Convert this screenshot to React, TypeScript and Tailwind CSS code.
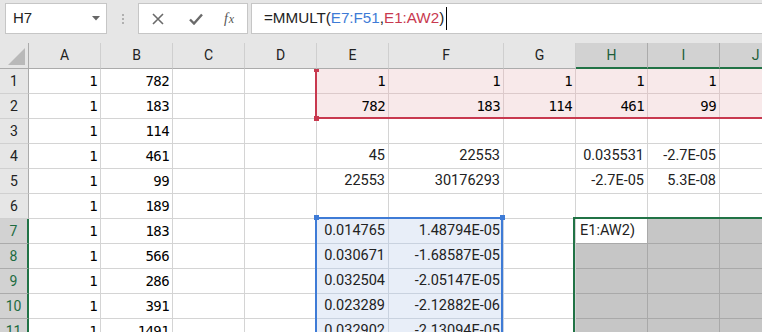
import React from "react";

type Kind = "mono" | "sans";
type Cell = { v: string; k?: Kind };

const W = ["w-[72px]", "w-[72px]", "w-[72px]", "w-[72px]", "w-[72px]", "w-[115px]", "w-[72px]", "w-[72px]", "w-[72px]", "w-[72px]"];
const LETTERS = ["A", "B", "C", "D", "E", "F", "G", "H", "I", "J"];

const m = (v: string): Cell => ({ v, k: "mono" });
const s = (v: string): Cell => ({ v, k: "sans" });
const e: Cell = { v: "" };

const ROWS: Cell[][] = [
  [m("1"), m("782"), e, e, m("1"), m("1"), m("1"), m("1"), m("1"), e],
  [m("1"), m("183"), e, e, m("782"), m("183"), m("114"), m("461"), m("99"), e],
  [m("1"), m("114"), e, e, e, e, e, e, e, e],
  [m("1"), m("461"), e, e, s("45"), s("22553"), e, s("0.035531"), s("-2.7E-05"), e],
  [m("1"), m("99"), e, e, s("22553"), s("30176293"), e, s("-2.7E-05"), s("5.3E-08"), e],
  [m("1"), m("189"), e, e, e, e, e, e, e, e],
  [m("1"), m("183"), e, e, s("0.014765"), s("1.48794E-05"), e, e, e, e],
  [m("1"), m("566"), e, e, s("0.030671"), s("-1.68587E-05"), e, e, e, e],
  [m("1"), m("286"), e, e, s("0.032504"), s("-2.05147E-05"), e, e, e, e],
  [m("1"), m("391"), e, e, s("0.023289"), s("-2.12882E-06"), e, e, e, e],
  [m("1"), m("1491"), e, e, s("0.032902"), s("-2.13094E-05"), e, e, e, e],
];

function region(r: number, c: number): string {
  if (r <= 1 && c >= 4) return "bg-[#f8e9ea] border-[#dccacb]";
  if (r >= 6 && (c === 4 || c === 5)) return "bg-[#e8eef8] border-[#c9d2df]";
  if (r >= 6 && c >= 7 && !(r === 6 && c === 7)) return "bg-[#c6c6c6] border-[#a9a9a9]";
  return "bg-white border-[#d4d4d4]";
}

function GridCell({ cell, r, c }: { cell: Cell; r: number; c: number }) {
  const font =
    cell.k === "mono"
      ? "font-['DejaVu_Sans_Mono',monospace] text-[14px] tracking-[-0.6px] text-black"
      : "font-['Roboto',sans-serif] text-[14.5px] text-[#222]";
  return (
    <div
      className={`${W[c]} h-[25px] shrink-0 border-r border-b ${region(r, c)} flex items-center justify-end pr-[3px] overflow-hidden ${font}`}
    >
      {cell.v}
    </div>
  );
}

export default function App() {
  return (
    <div className="w-[762px] h-[332px] overflow-hidden bg-[#e6e6e6] relative font-['Roboto',sans-serif]">
      {/* toolbar */}
      <div className="h-[43px] flex items-start pt-[3px] pl-[5px]">
        <div className="w-[102px] h-[31px] bg-white border border-[#c6c6c6] flex items-center pl-[7px] pr-[6px] justify-between">
          <span className="text-[15px] text-[#222] font-['Liberation_Sans',sans-serif]">H7</span>
          <svg width="8" height="5" viewBox="0 0 8 5"><path d="M0 0h8L4 4.5z" fill="#666" /></svg>
        </div>
        <div className="w-[31px] h-[31px] flex flex-col items-center justify-center gap-[2px]">
          <div className="w-[2px] h-[2px] bg-[#b0b0b0]" />
          <div className="w-[2px] h-[2px] bg-[#b0b0b0]" />
          <div className="w-[2px] h-[2px] bg-[#b0b0b0]" />
        </div>
        <div className="w-[110px] h-[31px] bg-white border border-[#c6c6c6] flex items-center">
          <div className="w-[38px] flex justify-center">
            <svg width="12" height="12" viewBox="0 0 12 12"><path d="M1 1l10 10M11 1L1 11" stroke="#6a6a6a" strokeWidth="1.6" /></svg>
          </div>
          <div className="w-[38px] flex justify-center">
            <svg width="14" height="12" viewBox="0 0 14 12"><path d="M1 6.5l4 4L13 1.5" stroke="#6a6a6a" strokeWidth="2.4" fill="none" /></svg>
          </div>
          <div className="w-[28px] flex justify-center items-baseline font-['Liberation_Serif',serif] italic text-[14px] text-[#555]">
            f<span className="text-[12px] ml-[1px]">x</span>
          </div>
        </div>
        <div className="ml-[3px] flex-1 h-[31px] bg-white border border-[#c6c6c6] border-r-0 flex items-center pl-[12px] font-['Liberation_Sans',sans-serif] text-[15.2px] text-[#222]">
          <span>=MMULT(</span>
          <span className="text-[#3e7bd6]">E7:F51</span>
          <span>,</span>
          <span className="text-[#c8394f]">E1:AW2</span>
          <span>)</span>
          <div className="ml-[2px] w-[1px] h-[23px] bg-black" />
        </div>
      </div>

      {/* column header */}
      <div className="flex h-[26px]">
        <div className="w-[29px] shrink-0 h-[26px] border-r border-b border-[#ababab] bg-[#e6e6e6] relative">
          <svg className="absolute left-[8px] top-[5px]" width="18" height="18" viewBox="0 0 18 18"><path d="M17 0V17H0z" fill="#b9b9b9" /></svg>
        </div>
        {LETTERS.map((L, i) =>
          i >= 7 ? (
            <div key={L} className={`${W[i]} shrink-0 h-[26px] bg-[#d2d2d2] border-r border-[#ababab] border-b-2 border-b-[#217346] flex items-center justify-center text-[14px] text-[#1d5e3a]`}>{L}</div>
          ) : (
            <div key={L} className={`${W[i]} shrink-0 h-[26px] bg-[#e6e6e6] border-r border-[#cfcfcf] border-b border-b-[#ababab] flex items-center justify-center text-[14px] text-[#222]`}>{L}</div>
          )
        )}
      </div>

      {/* body */}
      <div className="relative">
        {ROWS.map((row, r) => (
          <div key={r} className="flex">
            {r >= 6 ? (
              <div className="w-[29px] shrink-0 h-[25px] bg-[#d2d2d2] border-b border-[#ababab] border-r-2 border-r-[#217346] flex items-center justify-center text-[14px] text-[#1d6b40]">{r + 1}</div>
            ) : (
              <div className="w-[29px] shrink-0 h-[25px] bg-[#e6e6e6] border-b border-[#d0d0d0] border-r border-r-[#ababab] flex items-center justify-center text-[14px] text-[#222]">{r + 1}</div>
            )}
            {row.map((cell, c) =>
              r === 6 && c === 7 ? (
                <div key={c} className="w-[72px] h-[25px] shrink-0 bg-white border-r border-b border-[#a9a9a9] flex items-center pl-[4px] font-['Roboto',sans-serif] text-[14.5px] text-[#222]">E1:AW2)</div>
              ) : (
                <GridCell key={c} cell={cell} r={r} c={c} />
              )
            )}
          </div>
        ))}

        {/* red reference range E1:AW2 */}
        <div className="absolute left-[315px] top-0 w-[2px] h-[50px] bg-[#c8394f]" />
        <div className="absolute left-[315px] top-[48px] right-0 h-[2px] bg-[#c8394f]" />
        <div className="absolute left-[314px] top-0 w-[5px] h-[3px] bg-[#c8394f]" />
        <div className="absolute left-[314px] top-[47px] w-[5px] h-[5px] bg-[#c8394f]" />

        {/* blue reference range E7:F51 */}
        <div className="absolute left-[315px] top-[148px] w-[2px] h-[120px] bg-[#3e7bd6]" />
        <div className="absolute left-[501px] top-[148px] w-[2px] h-[120px] bg-[#3e7bd6]" />
        <div className="absolute left-[315px] top-[148px] w-[188px] h-[2px] bg-[#3e7bd6]" />
        <div className="absolute left-[314px] top-[146px] w-[5px] h-[5px] bg-[#3e7bd6]" />
        <div className="absolute left-[500px] top-[146px] w-[5px] h-[5px] bg-[#3e7bd6]" />

        {/* green selection H7 */}
        <div className="absolute left-[573px] top-[148px] w-[2px] h-[120px] bg-[#217346]" />
        <div className="absolute left-[573px] top-[148px] right-0 h-[2px] bg-[#217346]" />
      </div>
    </div>
  );
}
